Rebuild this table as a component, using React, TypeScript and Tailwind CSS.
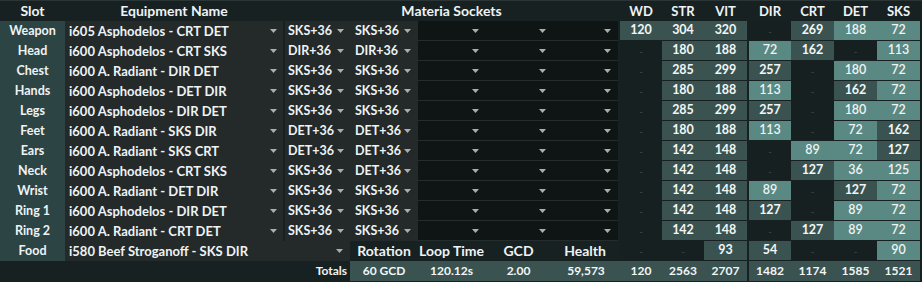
import { ReactNode } from 'react';

type Shade = 'd' | 'm' | 'l';

const shadeClass: Record<Shade, string> = {
  d: 'bg-[#162020] text-[#3e4a4a]',
  m: 'bg-[#3a5351] text-[#f2f6f6] font-bold',
  l: 'bg-[#5a8882] text-[#eef4f3] font-semibold',
};

const rows = [
  { slot: 'Weapon', name: 'i605 Asphodelos - CRT DET', mat: ['SKS+36', 'SKS+36'], stats: 'm120 m304 m320 d m269 l188 l72' },
  { slot: 'Head', name: 'i600 Asphodelos - CRT SKS', mat: ['DIR+36', 'DIR+36'], stats: 'd m180 m188 l72 m162 d l113' },
  { slot: 'Chest', name: 'i600 A. Radiant - DIR DET', mat: ['SKS+36', 'SKS+36'], stats: 'd m285 m299 m257 d l180 l72' },
  { slot: 'Hands', name: 'i600 Asphodelos - DET DIR', mat: ['SKS+36', 'SKS+36'], stats: 'd m180 m188 l113 d m162 l72' },
  { slot: 'Legs', name: 'i600 Asphodelos - DIR DET', mat: ['SKS+36', 'SKS+36'], stats: 'd m285 m299 m257 d l180 l72' },
  { slot: 'Feet', name: 'i600 A. Radiant - SKS DIR', mat: ['DET+36', 'DET+36'], stats: 'd m180 m188 l113 d l72 m162' },
  { slot: 'Ears', name: 'i600 A. Radiant - SKS CRT', mat: ['DET+36', 'DET+36'], stats: 'd m142 m148 d l89 l72 m127' },
  { slot: 'Neck', name: 'i600 Asphodelos - CRT SKS', mat: ['SKS+36', 'DET+36'], stats: 'd m142 m148 d m127 l36 l125' },
  { slot: 'Wrist', name: 'i600 A. Radiant - DET DIR', mat: ['SKS+36', 'SKS+36'], stats: 'd m142 m148 l89 d m127 l72' },
  { slot: 'Ring 1', name: 'i600 Asphodelos - DIR DET', mat: ['SKS+36', 'SKS+36'], stats: 'd m142 m148 m127 d l89 l72' },
  { slot: 'Ring 2', name: 'i600 A. Radiant - CRT DET', mat: ['SKS+36', 'SKS+36'], stats: 'd m142 m148 d m127 l89 l72' },
];

const statW = ['w-[42px]', 'w-[42px]', 'w-[43px]', 'w-[42px]', 'w-[43px]', 'w-[43px]', 'w-[43px]'];

function Arrow() {
  return (
    <svg width="7" height="4" viewBox="0 0 7 4" className="shrink-0">
      <path d="M0 0h7L3.5 4z" fill="#a9aeae" />
    </svg>
  );
}

function Stat({ v, w }: { v: string; w: string }) {
  const shade = v[0] as Shade;
  const val = v.slice(1) || '-';
  return (
    <div className={`${w} h-[19px] flex items-center justify-center ${shadeClass[shade]}`}>
      <span className={val === '-' ? 'text-[10px]' : 'text-[12.5px]'}>{val}</span>
    </div>
  );
}

function Stats({ s }: { s: string[] }) {
  return (
    <>
      <Stat v={s[0]} w={statW[0]} />
      <Stat v={s[1]} w={statW[1]} />
      <Stat v={s[2]} w={statW[2]} />
      <div className="w-[2px]" />
      <Stat v={s[3]} w={statW[3]} />
      <Stat v={s[4]} w={statW[4]} />
      <Stat v={s[5]} w={statW[5]} />
      <Stat v={s[6]} w={statW[6]} />
    </>
  );
}

function Select({ w, children, pad = 'pl-1 pr-[6px]', dark }: { w: string; children?: ReactNode; pad?: string; dark?: boolean }) {
  return (
    <div
      className={`${w} h-5 flex items-center justify-between ${pad} ${
        dark ? 'bg-[#0f1515] border-b border-[#252c2c]' : 'bg-[#24292a]'
      }`}
    >
      <span>{children}</span>
      <Arrow />
    </div>
  );
}

function Slot({ children }: { children: ReactNode }) {
  return <div className="w-[65px] h-5 bg-[#2d4444] flex items-center justify-center font-bold text-[12.5px]">{children}</div>;
}

function Label({ w, children }: { w: string; children: ReactNode }) {
  return <div className={`${w} h-5 flex items-center justify-center text-[14px] font-bold`}>{children}</div>;
}

export default function App() {
  return (
    <div className="w-[922px] h-[282px] bg-[#182121] text-[#eef3f5] text-[12px] font-['Lato','Open_Sans',sans-serif] leading-none overflow-hidden">
      <div className="flex h-[21px] border-t border-[#2b3535] text-[14px] font-bold">
        <div className="w-[65px] flex items-center justify-center">Slot</div>
        <div className="w-[218px] flex items-center justify-center">Equipment Name</div>
        <div className="w-[2px]" />
        <div className="w-[333px] flex items-center justify-center">Materia Sockets</div>
        <div className="w-[2px]" />
        {['WD', 'STR', 'VIT', '', 'DIR', 'CRT', 'DET', 'SKS'].map((h, i) =>
          h ? (
            <div key={h} className={`${statW[i > 3 ? i - 1 : i]} flex items-center justify-center text-[13px]`}>
              {h}
            </div>
          ) : (
            <div key="gap" className="w-[2px]" />
          )
        )}
      </div>

      {rows.map((r) => (
        <div key={r.slot} className="flex h-5">
          <Slot>{r.slot}</Slot>
          <Select w="w-[218px]" pad="pl-[4px] pr-[6px]">
            <span className="font-bold text-[13px]">{r.name}</span>
          </Select>
          <div className="w-[2px]" />
          <Select w="w-[65px]" pad="pl-[3px] pr-[6px]">
            <span className="font-bold text-[12.5px]">{r.mat[0]}</span>
          </Select>
          <Select w="w-[68px]" pad="pl-[5px] pr-[7px]">
            <span className="font-bold text-[12.5px]">{r.mat[1]}</span>
          </Select>
          <Select w="w-[67px]" pad="pl-1 pr-[6px]" dark />
          <Select w="w-[67px]" pad="pl-1 pr-[6px]" dark />
          <Select w="w-[66px]" pad="pl-1 pr-[7px]" dark />
          <div className="w-[2px]" />
          <Stats s={r.stats.split(' ')} />
        </div>
      ))}

      <div className="flex h-5">
        <Slot>Food</Slot>
        <Select w="w-[285px]" pad="pl-[4px] pr-[7px]">
          <span className="font-bold text-[13px]">i580 Beef Stroganoff - SKS DIR</span>
        </Select>
        <Label w="w-[68px]">Rotation</Label>
        <Label w="w-[67px]">Loop Time</Label>
        <Label w="w-[67px]">GCD</Label>
        <Label w="w-[66px]">Health</Label>
        <div className="w-[2px]" />
        <Stats s={['d', 'd', 'm93', 'm54', 'd', 'd', 'l90']} />
      </div>

      <div className="flex h-5 font-bold">
        <div className="w-[350px] flex items-center justify-end pr-[3px]">Totals</div>
        <div className="flex bg-[#3a5351] text-[#f2f6f6]">
          {[
            ['w-[68px]', '60 GCD'],
            ['w-[67px]', '120.12s'],
            ['w-[67px]', '2.00'],
            ['w-[68px]', '59,573'],
            ['w-[42px]', '120'],
            ['w-[42px]', '2563'],
            ['w-[43px]', '2707'],
          ].map(([w, v]) => (
            <div key={v} className={`${w} h-5 flex items-center justify-center`}>
              {v}
            </div>
          ))}
        </div>
        <div className="w-[2px]" />
        <div className="flex bg-[#3a5351] text-[#f2f6f6]">
          {[
            ['w-[42px]', '1482'],
            ['w-[43px]', '1174'],
            ['w-[43px]', '1585'],
            ['w-[43px]', '1521'],
          ].map(([w, v]) => (
            <div key={v} className={`${w} h-5 flex items-center justify-center`}>
              {v}
            </div>
          ))}
        </div>
      </div>
    </div>
  );
}
